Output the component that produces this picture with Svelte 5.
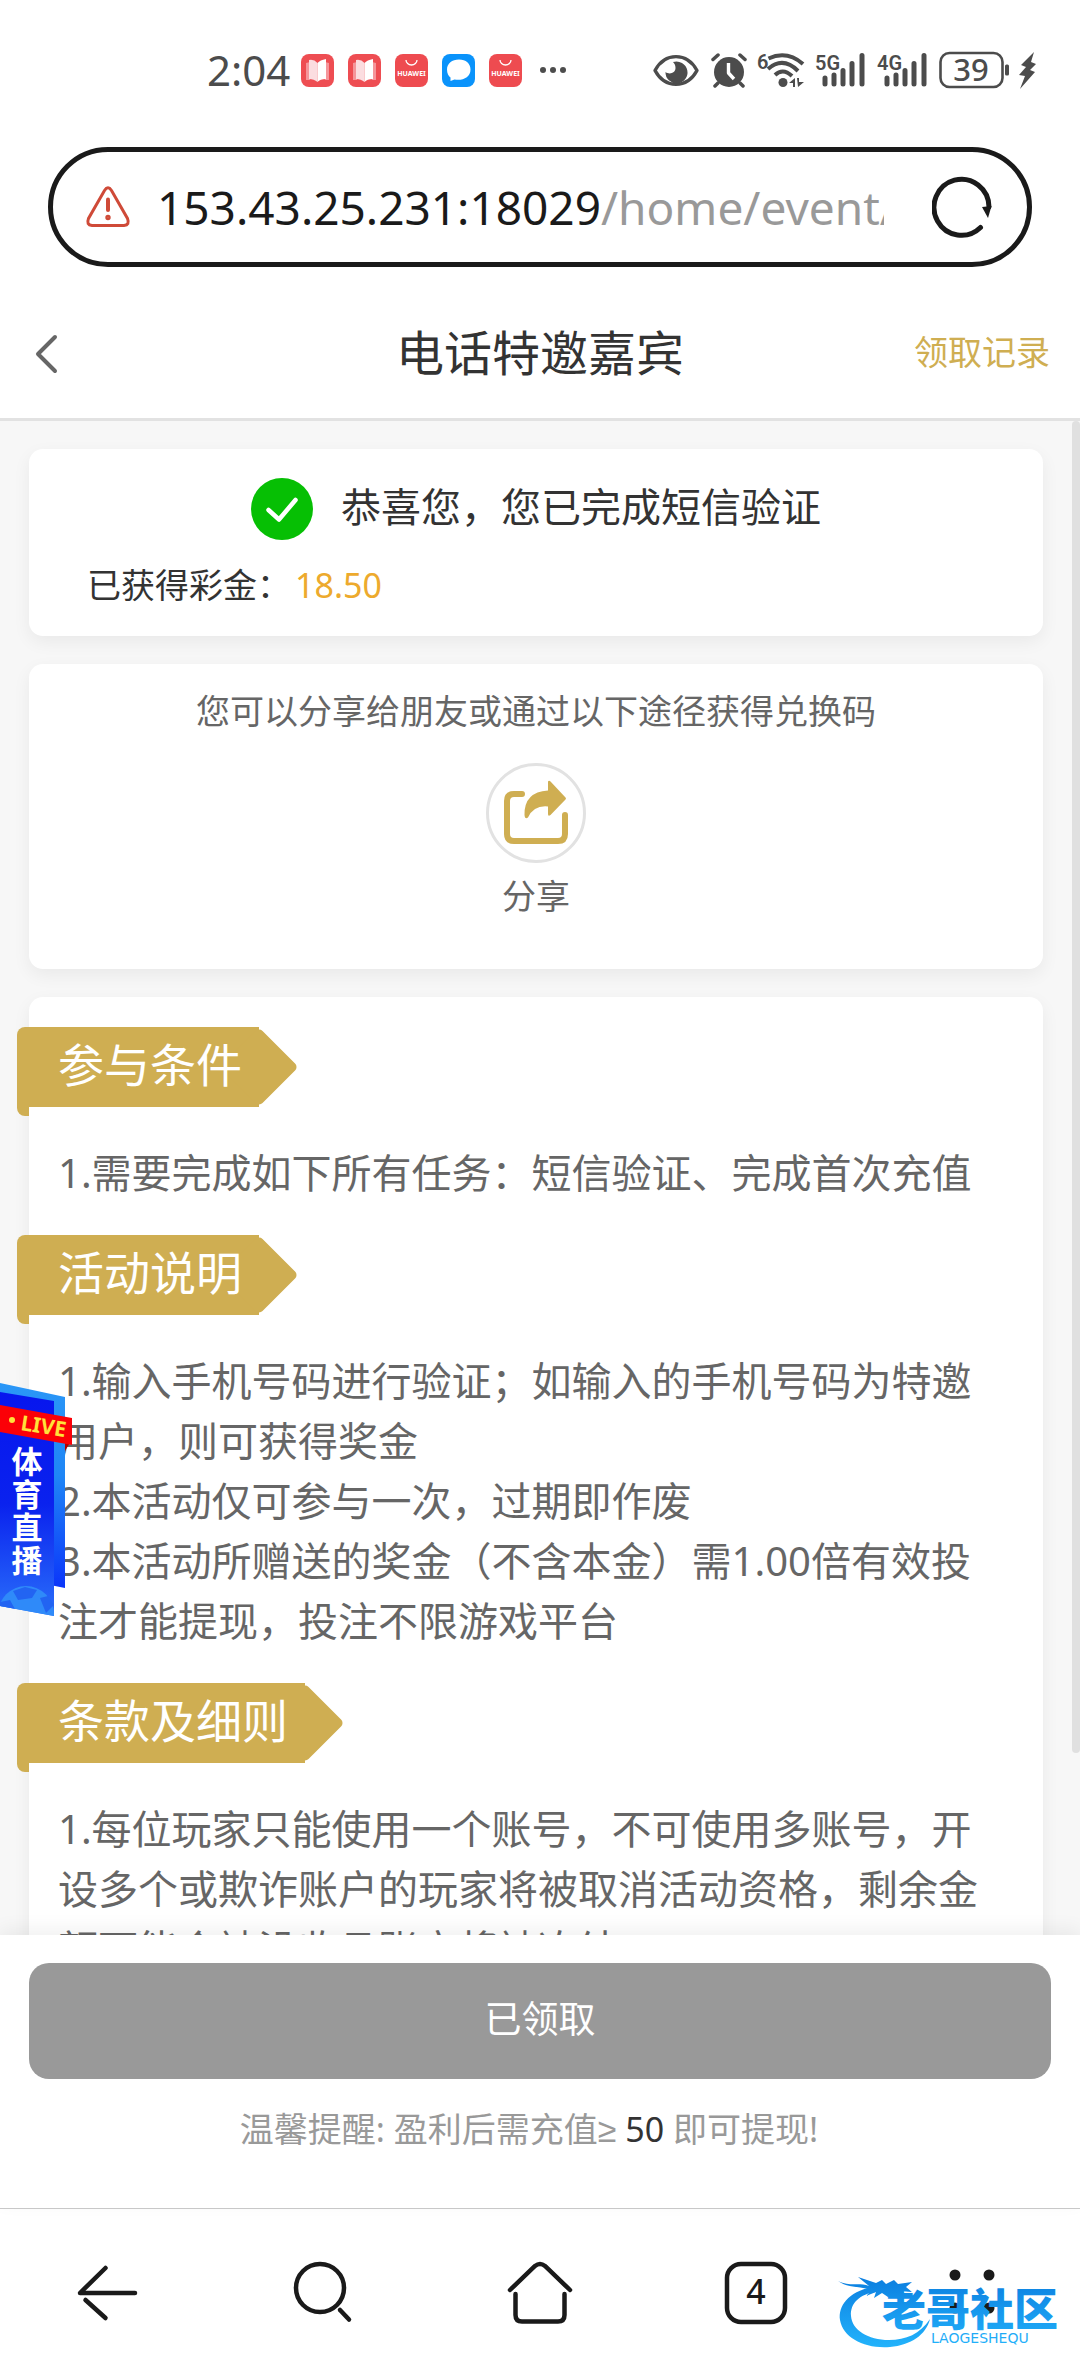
<script>
	let bonus = '18.50';
	let minDeposit = 50;
	let tabCount = 4;

	let apps = ['book', 'book', 'store', 'chat', 'store'];
	let networks = ['5G', '4G'];

	let sections = [
		{
			title: '参与条件',
			lines: ['1.需要完成如下所有任务：短信验证、完成首次充值']
		},
		{
			title: '活动说明',
			lines: [
				'1.输入手机号码进行验证；如输入的手机号码为特邀用户，则可获得奖金',
				'2.本活动仅可参与一次，过期即作废',
				'3.本活动所赠送的奖金（不含本金）需1.00倍有效投注才能提现，投注不限游戏平台'
			]
		},
		{
			title: '条款及细则',
			lines: [
				'1.每位玩家只能使用一个账号，不可使用多账号，开设多个或欺诈账户的玩家将被取消活动资格，剩余金额可能会被没收且账户将被冻结'
			]
		}
	];
</script>

<div class="page">
	<div class="status">
		<div class="status-left">
			<span class="clock">2:04</span>
			{#each apps as app}
				<svg class="app" width="33" height="33" viewBox="0 0 33 33">
					{#if app === 'book'}
						<rect width="33" height="33" rx="8" fill="#ee4d52" />
						<path d="M5 9 L9 8 V26 L5 26z M28 9 L24 8 V26 L28 26z" fill="#f5959a" />
						<path d="M8 6 Q13 5 16.500 9 V28 Q13 25 8 25z" fill="#fbdde0" />
						<path d="M25 5 Q19 6 16.500 9 V28 Q19 25 25 25z" fill="#fff" />
					{:else if app === 'store'}
						<rect width="33" height="33" rx="8" fill="#ee4b50" />
						<path d="M11 6 a5.500 5 0 0 0 11 0" fill="none" stroke="#fff" stroke-width="1.300" />
						<text x="16.500" y="21.500" class="brand">HUAWEI</text>
					{:else}
						<rect width="33" height="33" rx="8" fill="#0a93fb" />
						<path d="M17 5.500 c-7 0-12 4-12 10 0 4 1.500 6.500 3.500 8 v3.500 l4-1.500 c8 1.500 16-2 16-10 0-6-4.500-10-11.500-10z" fill="#fff" />
					{/if}
				</svg>
			{/each}
			<svg width="34" height="8" viewBox="0 0 34 8" fill="#4c4c4c">
				<circle cx="7" cy="4" r="3" />
				<circle cx="17" cy="4" r="3" />
				<circle cx="27" cy="4" r="3" />
			</svg>
		</div>
		<div class="status-right">
			<svg width="48" height="38" viewBox="0 0 48 38">
				<path d="M2 19.500 C12 1 34 1 44 19.500 C34 38 12 38 2 19.500z" fill="none" stroke="#4c4c4c" stroke-width="3.400" stroke-linejoin="round" />
				<path d="M20 11 a11 11 0 1 1 -7.500 10 c4 3 10 1 10-4 0-3-1-4.500-2.500-6z" fill="#4c4c4c" />
			</svg>
			<svg width="36" height="38" viewBox="0 0 36 38">
				<circle cx="18" cy="21" r="15" fill="#4c4c4c" />
				<path d="M2 8.500 L7 4 M34 8.500 L29 4 M7 32 L4 35 M29 32 L32 35" stroke="#4c4c4c" stroke-width="3.500" stroke-linecap="round" />
				<path d="M17.500 12 V22 L23 28" fill="none" stroke="#fff" stroke-width="3.400" stroke-linejoin="round" />
			</svg>
			<svg width="48" height="38" viewBox="0 0 48 38">
				<text x="0" y="18" class="net">6</text>
				<g fill="none" stroke="#4c4c4c" stroke-width="4">
					<path d="M11.500 7.500 Q30 -1 46 13" />
					<path d="M11 18 Q26 5 41 20" />
					<path d="M18 24 Q26 16.500 35 25" />
				</g>
				<circle cx="26" cy="31.500" r="4.500" fill="#4c4c4c" />
				<path d="M32 32 l6-5 v9 h-2 v-4z M40 27 h2 v4 h5 l-6 5z" fill="#4c4c4c" />
			</svg>
			{#each networks as network}
				<svg width="52" height="38" viewBox="0 0 52 38">
					<text x="0" y="19" class="net">{network}</text>
					<path d="M10 27 V33 M19 24 V33 M28 19.500 V33 M37 12.500 V33 M47 4.500 V33" stroke="#4c4c4c" stroke-width="5" stroke-linecap="round" />
				</svg>
			{/each}
			<svg width="70" height="38" viewBox="0 0 70 38">
				<rect x="1.500" y="2" width="62" height="34" rx="9" fill="none" stroke="#4c4c4c" stroke-width="2.600" />
				<rect x="66" y="13.500" width="4" height="11" rx="1.500" fill="#4c4c4c" />
				<text x="32" y="30" class="charge">39</text>
			</svg>
			<svg width="18" height="38" viewBox="0 0 18 38">
				<path d="M15 1 L2 14 L7 16 L0 24 L6 25 L1 38 L16 21 L11 19 L17 13 L12 11z" fill="#4c4c4c" />
			</svg>
		</div>
	</div>

	<div class="address">
		<svg width="46" height="44" viewBox="0 0 46 44" fill="none" stroke="#cf4a38" stroke-width="3" stroke-linecap="round">
			<path d="M19.500 5.500 Q23 0 26.500 5.500 L42.500 33.500 Q45 40 39 40.500 H7 Q1 40 3.500 33.500z" />
			<path d="M23 14.500 V25" stroke-width="4" />
			<circle cx="23" cy="32.500" r="1.200" />
		</svg>
		<button class="url" type="button">153.43.25.231:18029<span>/home/event/</span></button>
		<button class="icon-btn" type="button" aria-label="刷新">
			<svg width="62" height="64" viewBox="0 0 62 64">
				<path d="M57 32 A27.500 28 0 1 0 48.500 52.500" fill="none" stroke="#1a1a1a" stroke-width="5" stroke-linecap="round" />
				<path d="M50 32 L59.500 31 L56 43z" fill="#1a1a1a" />
			</svg>
		</button>
	</div>

	<header>
		<button class="icon-btn back" type="button" aria-label="返回">
			<svg width="34" height="44" viewBox="0 0 34 44" fill="none" stroke="#666" stroke-width="4" stroke-linecap="round" stroke-linejoin="round">
				<path d="M25 6 L8 23 L25 40" />
			</svg>
		</button>
		<h1>电话特邀嘉宾</h1>
		<a class="record" href="#record">领取记录</a>
	</header>

	<div class="viewport">
		<main>
			<section class="card result">
				<div class="success">
					<svg width="62" height="62" viewBox="0 0 62 62">
						<circle cx="31" cy="31" r="31" fill="#06bf04" />
						<path d="M17.500 32 L28 41.500 L44.500 22" fill="none" stroke="#fff" stroke-width="4.500" stroke-linecap="round" stroke-linejoin="round" />
					</svg>
					<h2>恭喜您，您已完成短信验证</h2>
				</div>
				<p class="bonus">已获得彩金：<strong>{bonus}</strong></p>
			</section>

			<section class="card share">
				<p>您可以分享给朋友或通过以下途径获得兑换码</p>
				<button class="share-btn" type="button">
					<span class="share-icon">
						<svg width="66" height="66" viewBox="0 0 66 66">
							<path d="M19 14 H11 Q4 14 4 21 V54 Q4 61 11 61 H55 Q62 61 62 54 V35" fill="none" stroke="#cfae52" stroke-width="6" stroke-linecap="round" />
							<path d="M45 1.500 Q46 0 47.500 1.500 L62.500 17.500 Q63.500 18.500 62.500 19.500 L47.500 35 Q45 37 45 34 V26.500 Q31 25 25 37.500 Q22 40 21.500 35 Q21 12 45 10.500z" fill="#cfae52" />
						</svg>
					</span>
					分享
				</button>
			</section>

			<section class="card rules">
				{#each sections as section}
					<h3>{section.title}</h3>
					<div class="rule-text">
						{#each section.lines as line}
							<p>{line}</p>
						{/each}
					</div>
				{/each}
			</section>
		</main>
		<div class="scrollbar"><div class="thumb"></div></div>

		<a class="live" href="#live" aria-label="体育直播">
			<svg width="72" height="234" viewBox="0 0 72 234">
				<defs>
					<linearGradient id="back" x1="0" y1="0" x2="0" y2="1">
						<stop offset="0" stop-color="#2a97f7" />
						<stop offset="0.450" stop-color="#1f86f6" />
						<stop offset="1" stop-color="#0b35fa" />
					</linearGradient>
					<linearGradient id="front" x1="0" y1="0" x2="0" y2="1">
						<stop offset="0" stop-color="#0716ee" />
						<stop offset="0.500" stop-color="#0a22ee" />
						<stop offset="1" stop-color="#2a6ffa" />
					</linearGradient>
					<clipPath id="panel"><path d="M0 9 L54 18 V233 L0 223z" /></clipPath>
				</defs>
				<path d="M0 0 L65 14 V205 L50 202 L0 190z" fill="url(#back)" />
				<path d="M0 9 L54 18 V233 L0 223z" fill="url(#front)" />
				<g clip-path="url(#panel)">
					<circle cx="26" cy="231" r="28" fill="#2f8af9" />
					<path d="M13 208 L25 204 L37 207 L32 215 L18 217z M0 219 L10 217 L16 228 L8 234 L0 230z M40 215 L48 213 L54 222 L46 230z" fill="#2264f2" />
				</g>
				<path d="M65 58 H71 L65 68z" fill="#b40000" />
				<path d="M0 22 L72 35 V62 L0 49z" fill="#fb0007" />
				<circle cx="12" cy="37" r="3" fill="#ffe23a" />
				<text x="20" y="47" class="live-tag" transform="rotate(9 20 47)">LIVE</text>
				<g class="live-name">
					<text x="27" y="90">体</text>
					<text x="27" y="123">育</text>
					<text x="27" y="156">直</text>
					<text x="27" y="189">播</text>
				</g>
			</svg>
		</a>
	</div>

	<div class="claim">
		<button type="button">已领取</button>
		<p>温馨提醒: 盈利后需充值≥ <b>{minDeposit}</b> 即可提现!</p>
	</div>

	<nav>
		<button type="button" aria-label="后退">
			<svg width="64" height="64" viewBox="0 0 64 64" fill="none" stroke="#1a1a1a" stroke-width="4.500" stroke-linecap="round" stroke-linejoin="round">
				<path d="M59 32 H4 L29.500 7" />
				<path d="M9.500 39 L29.500 57" />
			</svg>
		</button>
		<button type="button" aria-label="搜索">
			<svg width="64" height="64" viewBox="0 0 64 64" fill="none" stroke="#1a1a1a" stroke-width="4.500" stroke-linecap="round">
				<circle cx="28" cy="27" r="24" />
				<path d="M48 49 L57 58.500" />
			</svg>
		</button>
		<button type="button" aria-label="主页">
			<svg width="68" height="64" viewBox="0 0 68 64" fill="none" stroke="#1a1a1a" stroke-width="4.500" stroke-linecap="round">
				<path d="M4 29 L29 5 Q34 1 39 5 L64 29" />
				<path d="M9.500 33 V54 Q9.500 60.500 16 60.500 H52 Q58.500 60.500 58.500 54 V33" />
			</svg>
		</button>
		<button type="button" aria-label="标签页">
			<svg width="64" height="64" viewBox="0 0 64 64">
				<rect x="3" y="3" width="58" height="58" rx="14" fill="none" stroke="#1a1a1a" stroke-width="4.500" />
				<text x="32" y="43" class="tabs">{tabCount}</text>
			</svg>
		</button>
		<button type="button" aria-label="菜单">
			<svg width="64" height="64" viewBox="0 0 64 64" fill="#1a1a1a">
				<circle cx="15" cy="14" r="5.500" />
				<circle cx="49" cy="14" r="5.500" />
				<circle cx="15" cy="47" r="5.500" />
				<circle cx="49" cy="47" r="5.500" />
			</svg>
		</button>
		<svg class="stamp" width="226" height="76" viewBox="0 0 226 76">
			<defs>
				<linearGradient id="sky" gradientUnits="userSpaceOnUse" x1="0" y1="4" x2="0" y2="72">
					<stop offset="0" stop-color="#0c7fe0" />
					<stop offset="1" stop-color="#22b2fb" />
				</linearGradient>
			</defs>
			<g fill="url(#sky)">
				<path d="M34 13 C10 18 0 32 2 46 C5 64 27 75 52 73 C73 71 88 61 92 45 C82 60 68 66 51 66 C30 66 14 56 13 42 C12 29 22 20 38 18z" />
				<path d="M0 7 C12 13 21 8 31 12 L20 3 L38 9 L44 6 L48 10 L56 6 L60 10 L74 8 L68 13 L74 18 L62 17 L70 22 L57 20 L50 23 L44 19 L36 24 L38 18 L28 22 L34 16 C20 12 10 14 0 7z" />
				<text x="44" y="52" class="stamp-name">老哥社区</text>
				<text x="93" y="69" class="stamp-sub">LAOGESHEQU</text>
			</g>
		</svg>
	</nav>
</div>

<style>
	:global(body) {
		background: #fff;
	}
	.page {
		display: flex;
		flex-direction: column;
		height: 100vh;
		background: #fff;
		color: #333;
		font-family: "Noto Sans", "Noto Sans CJK SC", sans-serif;
		font-size: 34px;
		overflow: hidden;
	}
	h1, h2, h3, p {
		margin: 0;
		font-weight: 400;
	}
	svg {
		display: block;
		flex: none;
	}
	button {
		padding: 0;
		border: none;
		background: none;
		color: inherit;
		font: inherit;
		cursor: pointer;
	}
	a {
		text-decoration: none;
	}

	/* phone status bar */
	.status {
		display: flex;
		align-items: center;
		justify-content: space-between;
		padding: 40px 43px 0 207px;
		height: 60px;
		color: #4c4c4c;
	}
	.status-left {
		display: flex;
		align-items: center;
		gap: 14px;
	}
	.status-right {
		display: flex;
		align-items: center;
		gap: 10px;
	}
	.clock {
		font-size: 42px;
		line-height: 60px;
		margin-right: -3px;
	}
	.brand {
		font-size: 7px;
		font-weight: 700;
		fill: #fff;
		text-anchor: middle;
	}
	.net {
		font-family: Roboto, sans-serif;
		font-size: 20px;
		font-weight: 600;
		fill: #4c4c4c;
	}
	.charge {
		font-size: 31px;
		font-weight: 500;
		fill: #4c4c4c;
		text-anchor: middle;
	}

	.address {
		display: flex;
		align-items: center;
		gap: 26px;
		height: 110px;
		margin: 47px 48px 20px;
		padding: 0 33px 0 32px;
		border: 5px solid #1a1a1a;
		border-radius: 60px;
	}
	.url {
		flex: 1;
		min-width: 0;
		overflow: hidden;
		white-space: nowrap;
		text-align: left;
		font-size: 46px;
		line-height: 64px;
		color: #1a1a1a;
		margin-right: 22px;
	}
	.url span {
		color: #999;
	}

	header {
		display: grid;
		grid-template-columns: 1fr auto 1fr;
		align-items: center;
		height: 131px;
		padding: 0 30px;
		border-bottom: 3px solid #e2e2e2;
	}
	.back {
		justify-self: start;
	}
	h1 {
		font-size: 48px;
		line-height: 72px;
	}
	.record {
		justify-self: end;
		padding-bottom: 4px;
		color: #cfae52;
	}

	.viewport {
		position: relative;
		display: flex;
		flex: 1;
		min-height: 0;
		background: #f7f7f7;
	}
	main {
		display: flex;
		flex-direction: column;
		flex: 1;
		gap: 28px;
		padding: 28px 29px;
		overflow-y: auto;
		scrollbar-width: none;
	}
	.scrollbar {
		width: 8px;
	}
	.thumb {
		height: 88%;
		border-radius: 4px;
		background: #e0e0e0;
	}
	.card {
		flex: none;
		border-radius: 14px;
		background: #fff;
		box-shadow: 0 6px 18px rgba(0, 0, 0, 0.06);
	}
	.result {
		padding: 29px 58px 25px;
	}
	.success {
		display: flex;
		align-items: center;
		justify-content: center;
		gap: 28px;
	}
	h2 {
		padding-bottom: 4px;
		font-size: 40px;
		line-height: 58px;
	}
	.bonus {
		margin-top: 20px;
		line-height: 51px;
	}
	.bonus strong {
		margin-left: 4px;
		font-weight: 400;
		color: #edaa2d;
	}
	.share {
		display: flex;
		flex-direction: column;
		align-items: center;
		gap: 26px;
		padding: 22px 29px 47px;
		color: #666;
		line-height: 51px;
	}
	.share-btn {
		display: flex;
		flex-direction: column;
		align-items: center;
		gap: 8px;
	}
	.share-icon {
		display: flex;
		align-items: center;
		justify-content: center;
		width: 94px;
		height: 94px;
		border: 3px solid #e2e2e2;
		border-radius: 50%;
	}

	.rules {
		padding: 30px 44px 30px 29px;
	}
	h3 {
		position: relative;
		isolation: isolate;
		width: fit-content;
		margin-left: -41px;
		padding: 0 17px 6px 41px;
		border-top-left-radius: 8px;
		background: #cfae52;
		color: #fff;
		font-size: 46px;
		line-height: 74px;
	}
	h3::before {
		content: '';
		position: absolute;
		left: 0;
		top: 70px;
		width: 12px;
		height: 19px;
		border-radius: 0 0 0 8px;
		background: #cfae52;
	}
	h3::after {
		content: '';
		position: absolute;
		z-index: -1;
		right: -28px;
		top: 12px;
		width: 56px;
		height: 56px;
		border-radius: 5px;
		background: #cfae52;
		transform: rotate(45deg);
	}
	.rule-text {
		padding: 36px 0 32px;
		color: #666;
		font-size: 40px;
		line-height: 60px;
	}

	/* floating entry over the rules */
	.live {
		position: absolute;
		left: 0;
		bottom: 318px;
	}
	.live-tag {
		font-size: 21px;
		font-weight: 700;
		fill: #ffe23a;
	}
	.live-name {
		font-family: "Noto Sans CJK SC", sans-serif;
		font-size: 31px;
		font-weight: 700;
		fill: #fff;
		text-anchor: middle;
	}

	.claim {
		position: relative;
		padding: 28px 29px 53px;
		background: #fff;
		box-shadow: 0 -6px 18px rgba(0, 0, 0, 0.06);
		text-align: center;
		color: #999;
	}
	.claim button {
		display: block;
		width: 100%;
		padding-bottom: 4px;
		border-radius: 20px;
		background: #999;
		color: #fff;
		font-size: 37px;
		line-height: 112px;
	}
	.claim p {
		margin-top: 25px;
		padding-right: 22px;
		font-family: "Noto Sans", "Liberation Sans", "Noto Sans CJK SC", sans-serif;
		line-height: 51px;
	}
	.claim b {
		font-weight: 400;
		color: #333;
	}

	nav {
		position: relative;
		display: grid;
		grid-template-columns: repeat(5, 1fr);
		height: 167px;
		border-top: 1px solid #c8c8c8;
	}
	nav button {
		display: flex;
		align-items: center;
		justify-content: center;
	}
	.tabs {
		font-size: 34px;
		font-weight: 500;
		fill: #1a1a1a;
		text-anchor: middle;
	}
	.stamp {
		position: absolute;
		right: 16px;
		bottom: 26px;
	}
	.stamp-name {
		font-family: "Noto Sans CJK SC", sans-serif;
		font-size: 44px;
		font-weight: 900;
	}
	.stamp-sub {
		font-family: "DejaVu Sans", sans-serif;
		font-size: 14px;
	}
</style>
